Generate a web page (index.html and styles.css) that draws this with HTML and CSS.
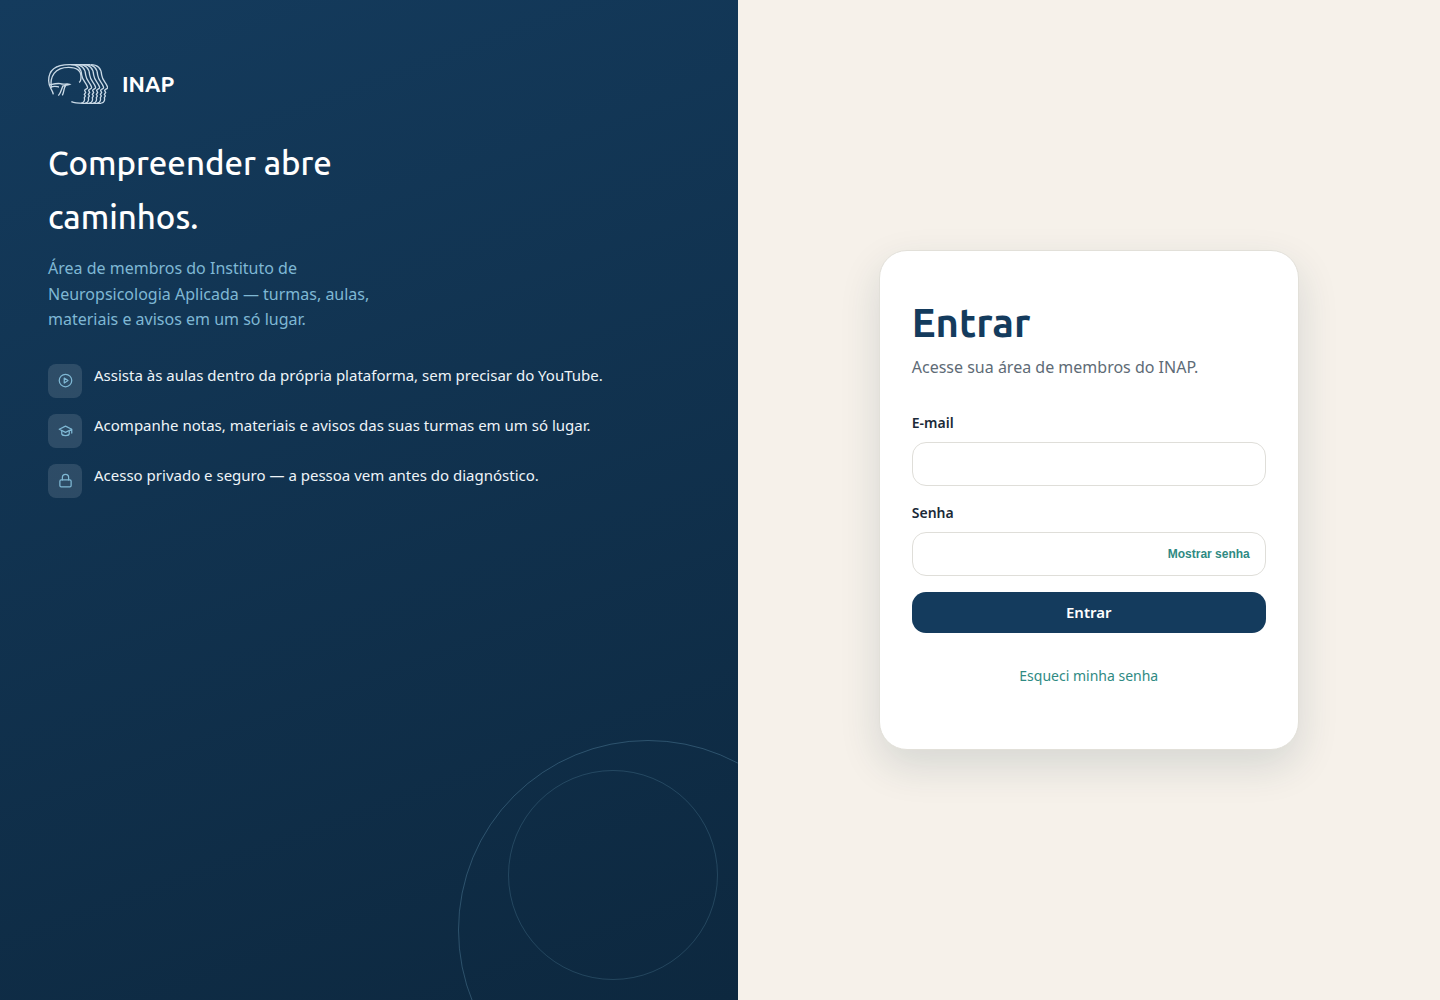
FILE: index.html
```html
<!DOCTYPE html>
<html lang="pt-BR">
<head>
<meta charset="utf-8">
<meta name="viewport" content="width=device-width, initial-scale=1">
<title>Entrar — INAP</title>
<link rel="stylesheet" href="styles.css">
</head>
<body>
<div class="auth">
  <aside class="hero">
    <div class="brand">
      <svg class="brand-logo" viewBox="24 27 180 120" aria-hidden="true">
        <defs>
          <path id="face" d="M92 29C116 29 124 43 125 60C127 77 140 84 143 97C143 103 135 102 134 106L137 113L133 118L136 123L133 128C135 134 133 144 124 144"/>
        </defs>
        <path d="M40 118C38 104 26 98 26 77C26 46 48 29 88 29H150"/>
        <path d="M34 98C29 65 44 37 86 37C109 37 123 45 123 65C123 75 122 80 117 82"/>
        <path d="M28 90C41 87 51 84 61 86C69 90 80 85 89 88C80 92 72 90 66 94M32 97C43 91 50 95 57 96M69 93C64 100 65 111 55 122M77 92C70 99 74 108 67 121"/>
        <use href="#face"/><use href="#face" x="12"/><use href="#face" x="24"/><use href="#face" x="36"/><use href="#face" x="48"/><use href="#face" x="60"/>
        <path d="M94 140C105 145 116 145 130 145H184"/>
      </svg>
      <span class="brand-name">INAP</span>
    </div>
    <h2 class="hero-title">Compreender abre caminhos.</h2>
    <p class="hero-text">Área de membros do Instituto de Neuropsicologia Aplicada — turmas, aulas, materiais e avisos em um só lugar.</p>
    <ul class="features">
      <li class="feature">
        <span class="feature-icon"><svg viewBox="0 0 24 24" aria-hidden="true"><circle cx="12" cy="12" r="10"/><path d="M10 8l6 4-6 4z"/></svg></span>
        <span>Assista às aulas dentro da própria plataforma, sem precisar do YouTube.</span>
      </li>
      <li class="feature">
        <span class="feature-icon"><svg viewBox="0 0 24 24" aria-hidden="true"><path d="M22 10L12 5 2 10l10 5 10-5v6"/><path d="M6 12v5c0 1 2 3 6 3s6-2 6-3v-5"/></svg></span>
        <span>Acompanhe notas, materiais e avisos das suas turmas em um só lugar.</span>
      </li>
      <li class="feature">
        <span class="feature-icon"><svg viewBox="0 0 24 24" aria-hidden="true"><rect x="3" y="11" width="18" height="11" rx="2"/><path d="M7 11V7a5 5 0 0 1 10 0v4"/></svg></span>
        <span>Acesso privado e seguro — a pessoa vem antes do diagnóstico.</span>
      </li>
    </ul>
  </aside>
  <main class="panel">
    <section class="card">
      <h1 class="card-title">Entrar</h1>
      <p class="card-text">Acesse sua área de membros do INAP.</p>
      <form class="form">
        <div class="field">
          <label class="label" for="email">E-mail</label>
          <input class="input" id="email" type="email" autocomplete="email">
        </div>
        <div class="field">
          <label class="label" for="senha">Senha</label>
          <div class="password">
            <input class="input input-password" id="senha" type="password" autocomplete="current-password">
            <button class="reveal" type="button">Mostrar senha</button>
          </div>
        </div>
        <button class="submit" type="submit">Entrar</button>
      </form>
      <p class="forgot"><a href="#recuperar">Esqueci minha senha</a></p>
    </section>
  </main>
</div>
</body>
</html>
```
FILE: styles.css
```css
*,
*::before,
*::after {
  box-sizing: border-box;
}

body {
  margin: 0;
  background: #f6f1ea;
  color: #1b2a38;
  font-family: "Noto Sans", sans-serif;
  font-size: 16px;
  line-height: 1.6;
}

h1, h2, p, ul {
  margin: 0;
  padding: 0;
}

.auth {
  display: grid;
  grid-template-columns: 1.05fr 1fr;
  min-height: 100vh;
}

.hero {
  position: relative;
  overflow: hidden;
  padding: 64px 48px;
  background: linear-gradient(160deg, #143b5d 0%, #0d283f 100%);
  color: #fff;
}

.hero::before,
.hero::after {
  content: "";
  position: absolute;
  border-radius: 50%;
}

.hero::before {
  right: -100px;
  bottom: -120px;
  width: 380px;
  height: 380px;
  border: 1px solid rgba(127, 184, 212, 0.28);
}

.hero::after {
  right: 20px;
  bottom: 20px;
  width: 210px;
  height: 210px;
  border: 1px solid rgba(127, 184, 212, 0.2);
}

.brand {
  display: flex;
  align-items: center;
  gap: 14px;
  margin-bottom: 32px;
}

.brand-logo {
  width: 60px;
  height: 40px;
  fill: none;
  stroke: #c9d9e6;
  stroke-width: 4;
}

.brand-name {
  font-family: Ubuntu, "Noto Sans", sans-serif;
  font-size: 22px;
  font-weight: 700;
  line-height: 36px;
}

.hero-title {
  max-width: 360px;
  margin-bottom: 12px;
  font-family: Ubuntu, "Noto Sans", sans-serif;
  font-size: 33px;
  font-weight: 500;
  line-height: 54px;
}

.hero-text {
  max-width: 340px;
  margin-bottom: 31px;
  color: #7fb8d4;
}

.features {
  display: grid;
  gap: 16px;
  list-style: none;
}

.feature {
  display: flex;
  gap: 12px;
  color: #eef4f8;
  font-size: 15px;
  line-height: 22px;
}

.feature-icon {
  display: grid;
  flex: none;
  place-items: center;
  width: 34px;
  height: 34px;
  border-radius: 8px;
  background: rgba(255, 255, 255, 0.12);
}

.feature-icon svg {
  width: 15px;
  height: 15px;
  fill: none;
  stroke: #7fb8d4;
  stroke-width: 2;
  stroke-linecap: round;
  stroke-linejoin: round;
}

.panel {
  display: grid;
  place-items: center;
  padding: 32px;
}

.card {
  width: 100%;
  max-width: 420px;
  padding: 48px 32px;
  border: 1px solid #e2e0d9;
  border-radius: 28px;
  background: #fff;
  box-shadow: 0 16px 40px rgba(20, 59, 70, 0.14);
}

.card-title {
  margin-bottom: 8px;
  color: #143b5d;
  font-family: Ubuntu, "Noto Sans", sans-serif;
  font-size: 40px;
  font-weight: 700;
  line-height: 48px;
}

.card-text {
  margin-bottom: 32px;
  color: #5e6b76;
}

.form {
  display: grid;
  gap: 16px;
}

.label {
  display: block;
  margin-bottom: 8px;
  font-size: 14px;
  font-weight: 600;
  line-height: 22px;
}

.input {
  display: block;
  width: 100%;
  height: 44px;
  padding: 0 14px;
  border: 1px solid #dfded9;
  border-radius: 14px;
  background: #fff;
  color: inherit;
  font: inherit;
}

.password {
  position: relative;
}

.input-password {
  padding-right: 116px;
}

.reveal {
  position: absolute;
  top: 0;
  right: 8px;
  bottom: 0;
  padding: 0 8px;
  border: 0;
  background: none;
  color: #2f8a83;
  font-family: "Liberation Sans", sans-serif;
  font-size: 12px;
  font-weight: 700;
}

.submit {
  padding: 10px 20px;
  border: 0;
  border-radius: 14px;
  background: #143b5d;
  color: #fff;
  font-family: inherit;
  font-size: 15px;
  font-weight: 600;
  line-height: 21px;
}

.forgot {
  margin: 32px 0 14px;
  font-size: 14px;
  line-height: 22px;
  text-align: center;
}

.forgot a {
  color: #2f8a83;
  text-decoration: none;
}
```
